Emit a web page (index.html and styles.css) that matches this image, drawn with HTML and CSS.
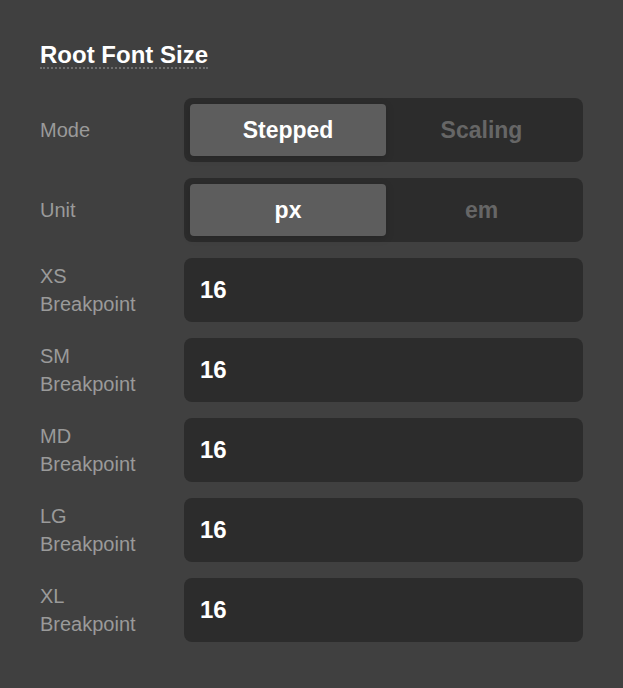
FILE: index.html
```html
<!DOCTYPE html>
<html>
<head>
<meta charset="utf-8">
<link rel="stylesheet" href="styles.css">
</head>
<body>
<div class="panel">
  <h2 class="title">Root Font Size</h2>
  <div class="rows">
    <div class="row">
      <div class="label">Mode</div>
      <div class="segmented">
        <div class="seg active">Stepped</div>
        <div class="seg">Scaling</div>
      </div>
    </div>
    <div class="row">
      <div class="label">Unit</div>
      <div class="segmented">
        <div class="seg active">px</div>
        <div class="seg">em</div>
      </div>
    </div>
    <div class="row">
      <div class="label">XS<br>Breakpoint</div>
      <div class="input">16</div>
    </div>
    <div class="row">
      <div class="label">SM<br>Breakpoint</div>
      <div class="input">16</div>
    </div>
    <div class="row">
      <div class="label">MD<br>Breakpoint</div>
      <div class="input">16</div>
    </div>
    <div class="row">
      <div class="label">LG<br>Breakpoint</div>
      <div class="input">16</div>
    </div>
    <div class="row">
      <div class="label">XL<br>Breakpoint</div>
      <div class="input">16</div>
    </div>
  </div>
</div>
</body>
</html>
```
FILE: styles.css
```css
html, body {
  margin: 0;
  padding: 0;
  background: #404040;
}

body, .panel, .title, .label, .seg, .input {
  font-family: "Liberation Sans", Arial, Helvetica, sans-serif;
}

.panel {
  padding: 42px 40px 40px 40px;
}

.title {
  display: inline-block;
  margin: 0 0 29px 0;
  font-size: 24px;
  font-weight: bold;
  color: #ffffff;
  border-bottom: 2px dotted #6e6e6e;
  line-height: 25px;
}

.rows {
  display: flex;
  flex-direction: column;
  gap: 16px;
}

.row {
  display: flex;
  align-items: center;
  height: 64px;
}

.label {
  width: 144px;
  flex: none;
  font-size: 20px;
  line-height: 28px;
  color: #9a9a9a;
}

.segmented {
  flex: 1;
  height: 64px;
  box-sizing: border-box;
  padding: 6px;
  background: #2c2c2c;
  border-radius: 8px;
  display: grid;
  grid-template-columns: 196px 1fr;
}

.seg {
  display: flex;
  align-items: center;
  justify-content: center;
  font-size: 23px;
  font-weight: bold;
  color: #666666;
  border-radius: 4px;
}

.seg.active {
  background: #5d5d5d;
  color: #ffffff;
  box-shadow: 0 2px 8px rgba(0, 0, 0, 0.15);
}

.input {
  flex: 1;
  height: 64px;
  box-sizing: border-box;
  padding: 0 16px;
  background: #2c2c2c;
  border-radius: 8px;
  display: flex;
  align-items: center;
  font-size: 24px;
  font-weight: bold;
  color: #ffffff;
}
```
